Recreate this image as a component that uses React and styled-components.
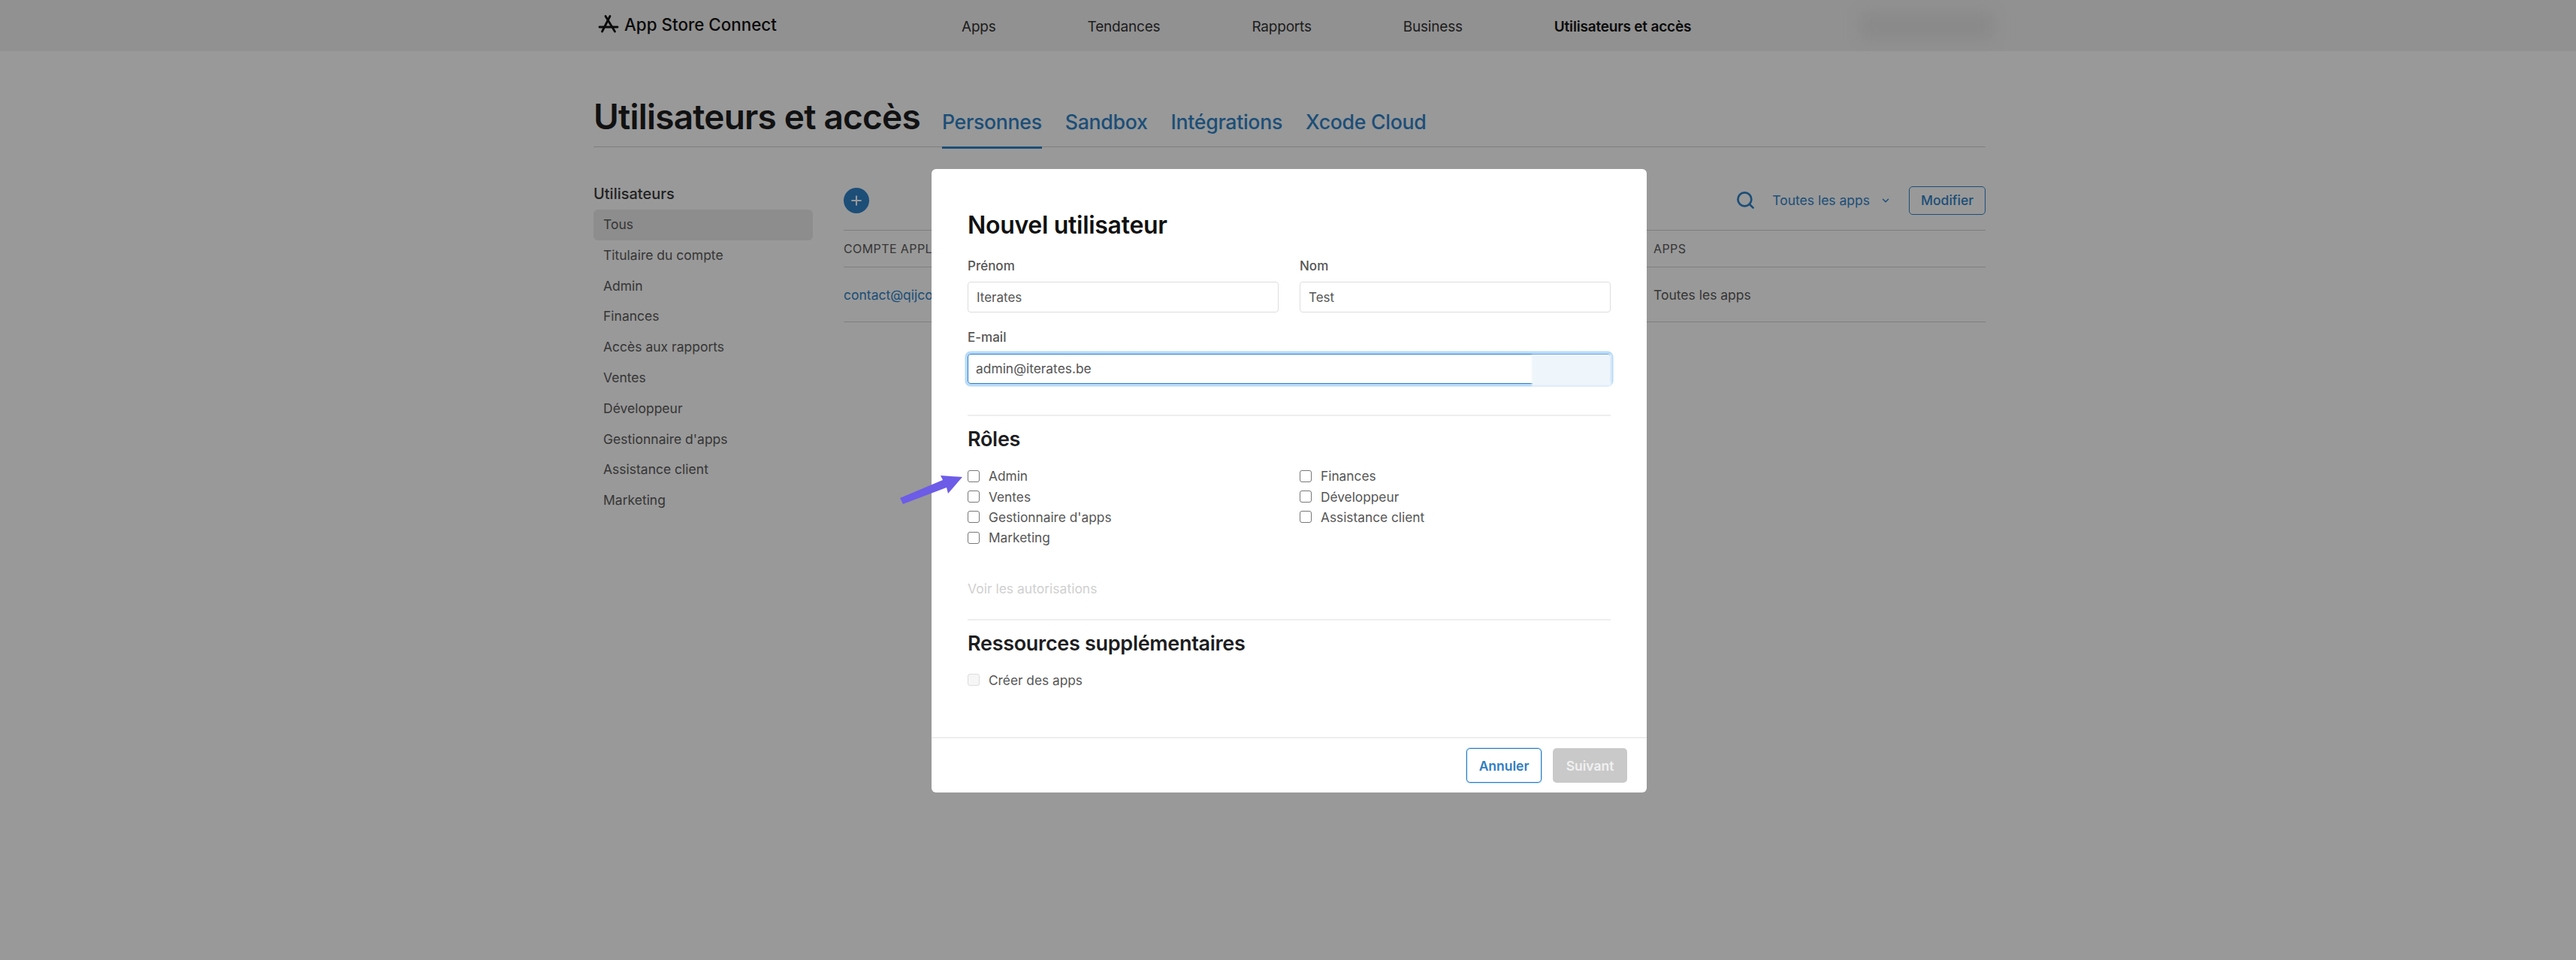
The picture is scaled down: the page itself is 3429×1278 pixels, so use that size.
import React from 'react';
import styled, { createGlobalStyle } from 'styled-components';
import { Plus, Search, ChevronDown } from 'lucide-react';

const Global = createGlobalStyle`
  html, body {
    margin: 0;
    padding: 0;
    background: #fff;
    font-family: Inter, "Liberation Sans", sans-serif;
  }
  * { box-sizing: border-box; }
`;

const Page = styled.div`
  position: relative;
  width: 3429px;
  height: 1278px;
  overflow: hidden;
  background: #fff;
`;

const TopBar = styled.header`
  height: 68px;
  background: #f2f2f2;
  display: flex;
  align-items: center;
  padding-left: 796px;
`;

const Logo = styled.div`
  display: flex;
  align-items: center;
  gap: 7px;
  width: 484px;
  margin-top: -4px;
  font-size: 22.4px;
  font-weight: 500;
  color: #111;
`;

const Nav = styled.nav`
  display: flex;
  gap: 122px;
  margin-top: 4px;
`;

const NavItem = styled.a`
  font-size: 19px;
  line-height: 24px;
  letter-spacing: -0.2px;
  color: ${props => (props.active ? '#111' : '#333')};
  font-weight: ${props => (props.active ? 600 : 400)};
`;

const BlurredAccount = styled.div`
  width: 180px;
  height: 38px;
  margin-left: 224px;
  background: #e6e6e6;
  filter: blur(9px);
`;

const Content = styled.div`
  width: 1857px;
  margin: 0 auto;
  padding-left: 4px;
`;

const TitleRow = styled.div`
  display: flex;
  align-items: baseline;
  height: 128px;
  padding-top: 59px;
  border-bottom: 1px solid #d2d2d2;
`;

const PageTitle = styled.h1`
  margin: 0 29px 0 0;
  font-size: 46px;
  line-height: 56px;
  font-weight: 600;
  letter-spacing: -0.8px;
  color: #1d1d1f;
`;

const Tabs = styled.div`
  display: flex;
  gap: 31px;
`;

const Tab = styled.a`
  position: relative;
  font-size: 26.7px;
  line-height: 34px;
  font-weight: 500;
  letter-spacing: -0.3px;
  color: #3083c8;

  ${props => props.active && `
    &::after {
      content: '';
      position: absolute;
      left: 0;
      right: 0;
      bottom: -19px;
      height: 3px;
      background: #3083c8;
    }
  `}
`;

const Columns = styled.div`
  display: flex;
  gap: 41px;
`;

const Sidebar = styled.aside`
  width: 292px;
  padding-top: 48px;
`;

const SideTitle = styled.div`
  font-size: 20px;
  line-height: 28px;
  font-weight: 500;
  color: #3a3a3a;
  margin-bottom: 7px;
`;

const SideItem = styled.div`
  height: 40.8px;
  line-height: 40px;
  padding-left: 13px;
  font-size: 17.5px;
  color: #5a5a5a;
  border-radius: 6px;
  background: ${props => (props.active ? '#ececec' : 'transparent')};
`;

const Main = styled.main`
  flex: 1;
  padding-top: 52px;
`;

const Toolbar = styled.div`
  display: flex;
  align-items: center;
  height: 59px;
  padding-bottom: 21px;
  border-bottom: 1px solid #d2d2d2;
`;

const AddButton = styled.div`
  width: 34px;
  height: 34px;
  border-radius: 50%;
  background: #3083c8;
  color: #fff;
  display: flex;
  align-items: center;
  justify-content: center;
`;

const SearchIcon = styled(Search)`
  margin-left: auto;
  color: #3083c8;
`;

const AppsFilter = styled.div`
  display: flex;
  align-items: center;
  gap: 14px;
  margin: 0 24px 0 22px;
  font-size: 17.5px;
  color: #3083c8;
`;

const EditButton = styled.div`
  width: 102px;
  height: 38px;
  border: 1.5px solid #3083c8;
  border-radius: 5px;
  display: flex;
  align-items: center;
  justify-content: center;
  font-size: 17.5px;
  font-weight: 500;
  color: #3083c8;
`;

const TableRow = styled.div`
  display: grid;
  grid-template-columns: 1078px 1fr;
  align-items: center;
  height: ${props => (props.head ? '49px' : '73px')};
  border-bottom: 1px solid #d2d2d2;
  font-size: ${props => (props.head ? '16px' : '17.5px')};
  letter-spacing: ${props => (props.head ? '0.4px' : '0')};
  color: #5a5a5a;
`;

const EmailLink = styled.span`
  color: #3083c8;
`;

const Overlay = styled.div`
  position: absolute;
  inset: 0;
  background: rgba(0, 0, 0, 0.4);
  display: flex;
  justify-content: center;
  align-items: flex-start;
  padding: 225px 0 0 3px;
`;

const Modal = styled.div`
  width: 952px;
  height: 830px;
  background: #fff;
  border-radius: 6px;
  display: flex;
  flex-direction: column;
`;

const ModalBody = styled.div`
  flex: 1;
  padding: 55px 48px 0;
`;

const ModalTitle = styled.h2`
  margin: 0 0 24px;
  font-size: 32px;
  line-height: 40px;
  font-weight: 600;
  letter-spacing: -0.3px;
  color: #111;
`;

const FieldRow = styled.div`
  display: grid;
  grid-template-columns: 414px 414px;
  gap: 28px;
  margin-bottom: 23px;
`;

const Label = styled.label`
  display: block;
  font-size: 17px;
  line-height: 20px;
  font-weight: 500;
  color: #555;
  margin-bottom: 11px;
`;

const InputBox = styled.div`
  height: 41px;
  border: 1px solid #ddd;
  border-radius: 4px;
  padding-left: 11px;
  font-size: 17px;
  line-height: 41px;
  color: #555;
`;

const EmailBox = styled.div`
  position: relative;
  height: 40px;
  border: 1.5px solid #2f7dbf;
  border-radius: 4px;
  box-shadow: 0 0 0 3.5px #b6dafa;
  padding-left: 10px;
  margin: 12px 0 41px;
  font-size: 17.4px;
  line-height: 37px;
  color: #555;
`;

const EmailSmudge = styled.div`
  position: absolute;
  top: 0;
  right: -2px;
  bottom: -4px;
  width: 106px;
  background: #eef5fb;
  filter: blur(1px);
`;

const Divider = styled.hr`
  margin: 0;
  border: 0;
  border-top: 2px solid #eee;
`;

const SectionTitle = styled.h3`
  margin: 15px 0 0;
  font-size: 27px;
  line-height: 32px;
  font-weight: 600;
  letter-spacing: -0.3px;
  color: #1d1d1f;
`;

const RoleGrid = styled.div`
  display: grid;
  grid-template-columns: 442px 1fr;
  grid-auto-rows: 27.4px;
  margin-top: 19px;
`;

const RoleItem = styled.div`
  display: flex;
  align-items: center;
  gap: 12px;
  font-size: 17.3px;
  color: #555;
`;

const CheckBox = styled.span`
  width: 16px;
  height: 16px;
  border-radius: 3px;
  border: 1.5px solid ${props => (props.disabled ? '#ddd' : '#777')};
  background: ${props => (props.disabled ? '#f6f6f6' : '#fff')};
`;

const PermissionsLink = styled.div`
  margin: 44px 0 30px;
  font-size: 17.5px;
  line-height: 20px;
  color: #d0d0d0;
`;

const ModalFooter = styled.footer`
  height: 74px;
  border-top: 2px solid #eee;
  display: flex;
  justify-content: flex-end;
  gap: 15px;
  padding: 13px 26px 0 0;
`;

const FooterButton = styled.div`
  width: ${props => (props.primary ? 99 : 100)}px;
  height: 46px;
  border-radius: 5px;
  display: flex;
  align-items: center;
  justify-content: center;
  font-size: 17.5px;
  font-weight: 600;
  color: ${props => (props.primary ? '#f0f0f0' : '#2f7dbf')};
  background: ${props => (props.primary ? '#c9c9c9' : '#fff')};
  border: ${props => (props.primary ? 'none' : '1.5px solid #2f7dbf')};
  box-shadow: ${props => (props.primary ? 'none' : '0 0 0 1px #b6dafa')};
`;

const Arrow = styled.svg`
  position: absolute;
  left: 1196px;
  top: 630px;
`;

const sideItems = ['Tous', 'Titulaire du compte', 'Admin', 'Finances', 'Accès aux rapports', 'Ventes', 'Développeur', "Gestionnaire d'apps", 'Assistance client', 'Marketing'];
const navItems = ['Apps', 'Tendances', 'Rapports', 'Business', 'Utilisateurs et accès'];
const tabs = ['Personnes', 'Sandbox', 'Intégrations', 'Xcode Cloud'];
const roles = ['Admin', 'Finances', 'Ventes', 'Développeur', "Gestionnaire d'apps", 'Assistance client', 'Marketing'];

export default function App() {
  return (
    <Page>
      <Global />
      <TopBar>
        <Logo>
          <svg width="28" height="26" viewBox="0 0 28 26" fill="none" stroke="#111" strokeWidth="2.8" strokeLinecap="round">
            <path d="M10 2.5 L22.5 23" />
            <path d="M16 2.5 L5.5 23" />
            <path d="M2 17 H26" />
          </svg>
          App Store Connect
        </Logo>
        <Nav>
          {navItems.map((item, i) => (
            <NavItem key={item} active={i === 4}>{item}</NavItem>
          ))}
        </Nav>
        <BlurredAccount />
      </TopBar>

      <Content>
        <TitleRow>
          <PageTitle>Utilisateurs et accès</PageTitle>
          <Tabs>
            {tabs.map((tab, i) => (
              <Tab key={tab} active={i === 0}>{tab}</Tab>
            ))}
          </Tabs>
        </TitleRow>
        <Columns>
          <Sidebar>
            <SideTitle>Utilisateurs</SideTitle>
            {sideItems.map((item, i) => (
              <SideItem key={item} active={i === 0}>{item}</SideItem>
            ))}
          </Sidebar>
          <Main>
            <Toolbar>
              <AddButton><Plus size={20} strokeWidth={2.5} /></AddButton>
              <SearchIcon size={27} strokeWidth={2.4} />
              <AppsFilter>Toutes les apps <ChevronDown size={14} strokeWidth={2.5} /></AppsFilter>
              <EditButton>Modifier</EditButton>
            </Toolbar>
            <TableRow head>
              <span>COMPTE APPLE</span>
              <span>APPS</span>
            </TableRow>
            <TableRow>
              <EmailLink>contact@qijcode.com</EmailLink>
              <span>Toutes les apps</span>
            </TableRow>
          </Main>
        </Columns>
      </Content>

      <Overlay>
        <Modal>
          <ModalBody>
            <ModalTitle>Nouvel utilisateur</ModalTitle>
            <FieldRow>
              <div>
                <Label>Prénom</Label>
                <InputBox>Iterates</InputBox>
              </div>
              <div>
                <Label>Nom</Label>
                <InputBox>Test</InputBox>
              </div>
            </FieldRow>
            <Label>E-mail</Label>
            <EmailBox>
              admin@iterates.be
              <EmailSmudge />
            </EmailBox>
            <Divider />
            <SectionTitle>Rôles</SectionTitle>
            <RoleGrid>
              {roles.map(role => (
                <RoleItem key={role}>
                  <CheckBox />
                  {role}
                </RoleItem>
              ))}
            </RoleGrid>
            <PermissionsLink>Voir les autorisations</PermissionsLink>
            <Divider />
            <SectionTitle>Ressources supplémentaires</SectionTitle>
            <RoleGrid>
              <RoleItem>
                <CheckBox disabled />
                Créer des apps
              </RoleItem>
            </RoleGrid>
          </ModalBody>
          <ModalFooter>
            <FooterButton>Annuler</FooterButton>
            <FooterButton primary>Suivant</FooterButton>
          </ModalFooter>
        </Modal>
        <Arrow width="90" height="44" viewBox="0 0 90 44">
          <path d="M2 33 L59 9 L56 3 L85 5 L66 27 L64 19 L6 41 Z" fill="#6c5ce7" />
        </Arrow>
      </Overlay>
    </Page>
  );
}
